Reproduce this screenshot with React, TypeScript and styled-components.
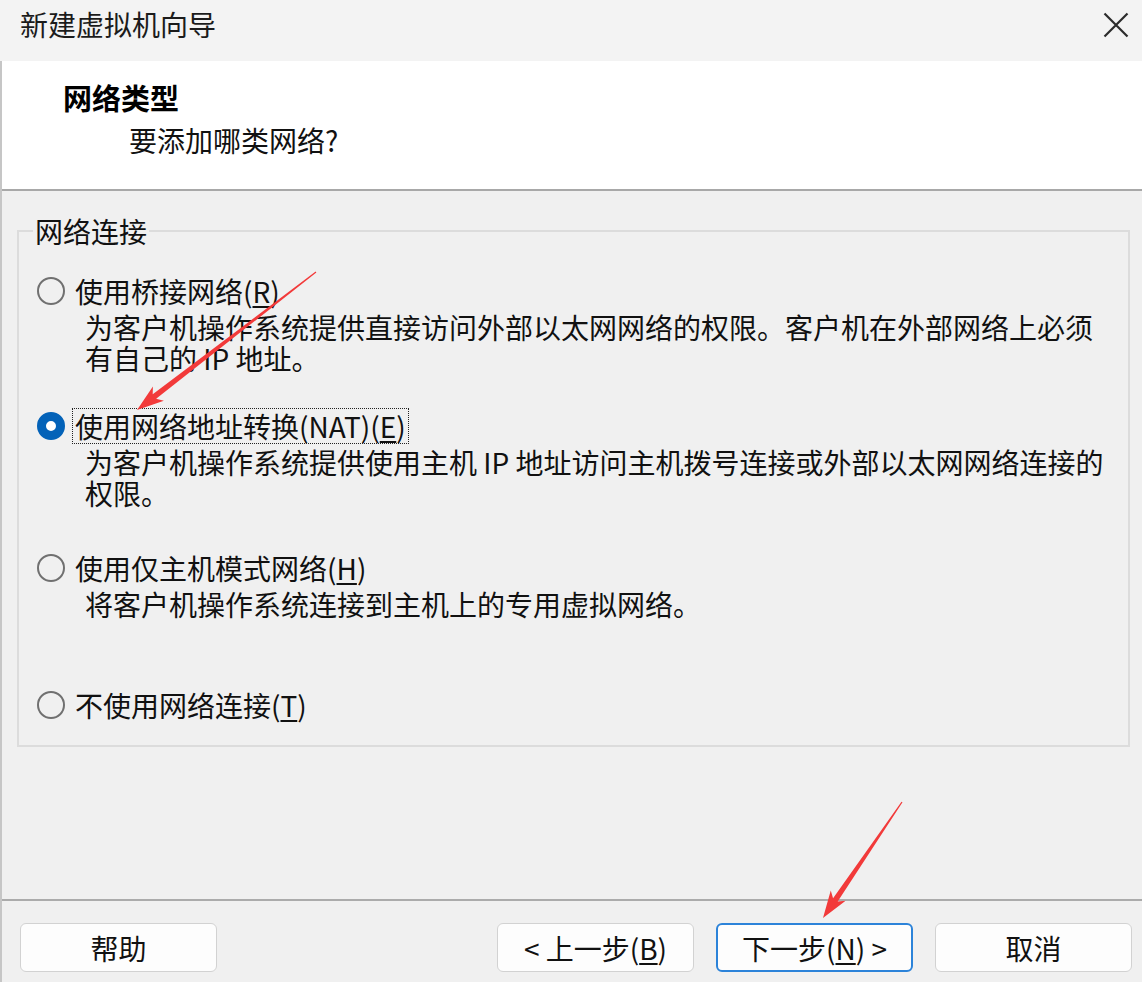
import React from "react";
import styled, { createGlobalStyle, css } from "styled-components";

const GlobalStyle = createGlobalStyle`
  html, body {
    margin: 0;
    padding: 0;
  }
  body {
    background: #f0f0f0;
    font-family: "Noto Sans CJK SC", "Noto Sans", sans-serif;
    color: #111;
  }
`;

const Window = styled.div`
  position: relative;
  width: 1142px;
  height: 982px;
  display: flex;
  flex-direction: column;
  overflow: hidden;
  background: #f0f0f0;
`;

const TitleBar = styled.div`
  height: 61px;
  flex-shrink: 0;
  box-sizing: border-box;
  padding: 8px 13px 0 20px;
  background: #f3f3f3;
  display: flex;
  justify-content: space-between;
  align-items: flex-start;
`;

const Title = styled.div`
  font-size: 28px;
  line-height: 32px;
  color: #1b1b1b;
`;

const Close = styled.div`
  margin-top: 4px;
  width: 26px;
  height: 26px;
  display: flex;
`;

const Content = styled.div`
  flex: 1;
  display: flex;
  flex-direction: column;
  border-left: 2px solid #c6c6c6;
`;

const Header = styled.div`
  height: 130px;
  flex-shrink: 0;
  box-sizing: border-box;
  padding: 20px 0 0 61px;
  background: #fff;
  border-bottom: 2px solid #a8a8a8;
`;

const Heading = styled.div`
  font-size: 29px;
  line-height: 32px;
  font-weight: 700;
  color: #000;
`;

const SubHeading = styled.div`
  margin-top: 11px;
  padding-left: 66px;
  font-size: 28px;
  line-height: 32px;
`;

const Body = styled.div`
  flex: 1;
  padding: 24px 12px 0 15px;
`;

const GroupBox = styled.fieldset`
  margin: 0;
  min-width: 0;
  padding: 26px 0 22px 18px;
  border: 2px solid #dcdcdc;
`;

const Legend = styled.legend`
  margin-left: -4px;
  padding: 0 2px;
  font-size: 28px;
  line-height: 32px;
`;

const Option = styled.div<{ $height?: number }>`
  ${(p) =>
    p.$height &&
    css`
      height: ${p.$height}px;
    `}
`;

const OptionRow = styled.div`
  display: flex;
  align-items: center;
`;

const Radio = styled.span<{ $checked?: boolean }>`
  width: 28px;
  height: 28px;
  box-sizing: border-box;
  border-radius: 50%;
  flex-shrink: 0;
  border: 2px solid #707070;
  ${(p) =>
    p.$checked &&
    css`
      border: 9px solid #0362b8;
      background: #fff;
    `}
`;

const Label = styled.span<{ $focused?: boolean }>`
  margin-left: 7px;
  padding: 1px 2px;
  font-size: 28px;
  line-height: 32px;
  white-space: nowrap;
  border: 1px dotted ${(p) => (p.$focused ? "#222" : "transparent")};
`;

const Description = styled.div`
  margin-top: 3px;
  padding-left: 48px;
  font-size: 28px;
  line-height: 31px;
  white-space: nowrap;
`;

const Key = styled.span`
  text-decoration: underline;
  text-underline-offset: 3px;
`;

const Footer = styled.div`
  height: 83px;
  flex-shrink: 0;
  box-sizing: border-box;
  padding: 22px 10px 0 18px;
  border-top: 2px solid #ababab;
  display: flex;
  justify-content: space-between;
  align-items: flex-start;
`;

const ButtonGroup = styled.div`
  display: flex;
  gap: 22px;
`;

const Button = styled.button<{ $primary?: boolean }>`
  width: 197px;
  height: 49px;
  box-sizing: border-box;
  border-radius: 6px;
  border: 1px solid #d2d2d2;
  background: #fdfdfd;
  font-family: inherit;
  font-size: 28px;
  line-height: 32px;
  color: #111;
  padding: 0;
  ${(p) =>
    p.$primary &&
    css`
      border: 2px solid #2c83d9;
    `}
`;

const Overlay = styled.svg`
  position: absolute;
  left: 0;
  top: 0;
  pointer-events: none;
`;

type ArrowProps = { x1: number; y1: number; x2: number; y2: number };

const Arrow = ({ x1, y1, x2, y2 }: ArrowProps) => {
  const L = Math.hypot(x2 - x1, y2 - y1);
  const angle = (Math.atan2(y2 - y1, x2 - x1) * 180) / Math.PI;
  const pts = [
    [0, -0.6],
    [L - 22, -2.8],
    [L - 27, -9],
    [L, 0],
    [L - 27, 9],
    [L - 22, 2.8],
    [0, 0.6],
  ]
    .map(([x, y]) => `${x},${y}`)
    .join(" ");
  return (
    <polygon
      points={pts}
      fill="#f23a3a"
      transform={`translate(${x1} ${y1}) rotate(${angle})`}
    />
  );
};

const options = [
  {
    label: "使用桥接网络",
    key: "R",
    lines: [
      "为客户机操作系统提供直接访问外部以太网网络的权限。客户机在外部网络上必须",
      "有自己的 IP 地址。",
    ],
    height: 135,
  },
  {
    label: "使用网络地址转换(NAT)",
    key: "E",
    lines: [
      "为客户机操作系统提供使用主机 IP 地址访问主机拨号连接或外部以太网网络连接的",
      "权限。",
    ],
    height: 142,
    checked: true,
  },
  {
    label: "使用仅主机模式网络",
    key: "H",
    lines: ["将客户机操作系统连接到主机上的专用虚拟网络。"],
    height: 137,
  },
  {
    label: "不使用网络连接",
    key: "T",
    lines: [],
  },
];

export default function App() {
  return (
    <>
      <GlobalStyle />
      <Window>
        <TitleBar>
          <Title>新建虚拟机向导</Title>
          <Close>
            <svg width="26" height="26" viewBox="0 0 26 26">
              <path
                d="M1.5 1.5 L24.5 24.5 M24.5 1.5 L1.5 24.5"
                stroke="#2b2b2b"
                strokeWidth="2.2"
                fill="none"
              />
            </svg>
          </Close>
        </TitleBar>
        <Content>
          <Header>
            <Heading>网络类型</Heading>
            <SubHeading>要添加哪类网络?</SubHeading>
          </Header>
          <Body>
            <GroupBox>
              <Legend>网络连接</Legend>
              {options.map((o) => (
                <Option key={o.key} $height={o.height}>
                  <OptionRow>
                    <Radio $checked={o.checked} />
                    <Label $focused={o.checked}>
                      {o.label}(<Key>{o.key}</Key>)
                    </Label>
                  </OptionRow>
                  {o.lines.length > 0 && (
                    <Description>
                      {o.lines.map((l, i) => (
                        <div key={i}>{l}</div>
                      ))}
                    </Description>
                  )}
                </Option>
              ))}
            </GroupBox>
          </Body>
          <Footer>
            <Button>帮助</Button>
            <ButtonGroup>
              <Button>
                &lt; 上一步(<Key>B</Key>)
              </Button>
              <Button $primary>
                下一步(<Key>N</Key>) &gt;
              </Button>
              <Button>取消</Button>
            </ButtonGroup>
          </Footer>
        </Content>
        <Overlay width="1142" height="982" viewBox="0 0 1142 982">
          <Arrow x1={316} y1={272} x2={137} y2={410} />
          <Arrow x1={902} y1={802} x2={823} y2={918} />
        </Overlay>
      </Window>
    </>
  );
}
